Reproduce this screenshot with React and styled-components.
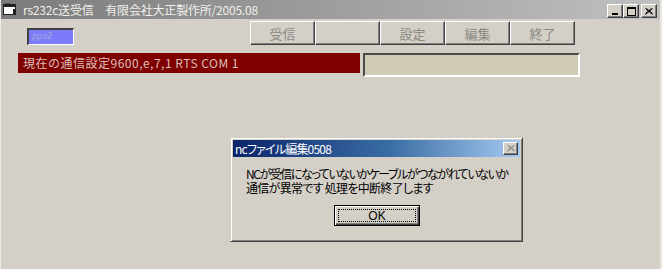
import React from "react";
import styled, { createGlobalStyle } from "styled-components";

const Global = createGlobalStyle`
  html, body { margin: 0; padding: 0; background: #d4d0c8; }
  body { font-family: "Noto Sans CJK JP", "Noto Sans", sans-serif; }
`;

const Window = styled.div`
  position: relative;
  width: 662px;
  height: 269px;
  box-sizing: border-box;
  background: #d4d0c8;
  border-left: 1px solid #ece9e0;
  border-right: 2px solid #e8e6dd;
  display: flex;
  flex-direction: column;
  overflow: hidden;
`;

const TitleBar = styled.div`
  height: 19px;
  display: flex;
  align-items: center;
  padding: 0 3px 0 2px;
  background: linear-gradient(to right, #7b7b7b 0%, #9a9a9a 45%, #c0c0c0 100%);
  color: #f0efea;
  font-size: 12px;
  letter-spacing: -0.2px;
  white-space: nowrap;
`;

const TitleText = styled.span`
  margin-left: 6px;
  flex: 1;
  font-feature-settings: "palt";
`;

const CaptionGroup = styled.div`
  display: flex;
  margin-top: 3px;
`;

const CaptionButton = styled.div`
  width: 16px;
  height: 14px;
  box-sizing: border-box;
  margin-left: ${(p) => (p.$gap ? "2px" : "0")};
  background: #d4d0c8;
  border-top: 1px solid #ffffff;
  border-left: 1px solid #ffffff;
  border-right: 1px solid #404040;
  border-bottom: 1px solid #404040;
  box-shadow: inset -1px -1px 0 #808080;
  display: flex;
  align-items: center;
  justify-content: center;
`;

const Body = styled.div`
  flex: 1;
  position: relative;
  display: flex;
  flex-direction: column;
  padding-top: 2px;
`;

const TopRow = styled.div`
  display: flex;
  align-items: flex-end;
  height: 24px;
  padding-left: 26px;
`;

const BlueBox = styled.div`
  width: 47px;
  height: 17px;
  box-sizing: border-box;
  background: #7b7bfb;
  border-top: 2px solid #404040;
  border-left: 2px solid #404040;
  border-right: 1px solid #ffffff;
  border-bottom: 1px solid #ffffff;
  color: #a8a8d4;
  font-family: "DejaVu Sans", sans-serif;
  font-size: 8px;
  line-height: 13px;
  padding-left: 3px;
  font-style: italic;
`;

const ButtonGroup = styled.div`
  display: flex;
  margin-left: 176px;
`;

const CmdButton = styled.div`
  width: 65px;
  height: 24px;
  box-sizing: border-box;
  background: #d4d0c8;
  border-top: 1px solid #ffffff;
  border-left: 1px solid #ffffff;
  border-right: 1px solid #404040;
  border-bottom: 1px solid #404040;
  box-shadow: inset -1px -1px 0 #808080;
  display: flex;
  align-items: center;
  justify-content: center;
  color: #8a8880;
  font-size: 13px;
`;

const SecondRow = styled.div`
  display: flex;
  align-items: flex-start;
  margin-top: 8px;
  padding-left: 17px;
`;

const StatusLabel = styled.div`
  width: 342px;
  height: 20px;
  background: #800000;
  color: #dcc0bc;
  font-size: 12px;
  line-height: 20px;
  padding-left: 5px;
  box-sizing: border-box;
  white-space: nowrap;
  letter-spacing: 0.5px;
`;

const InfoBox = styled.div`
  width: 217px;
  height: 24px;
  margin-left: 3px;
  box-sizing: border-box;
  background: #d2cbb4;
  border-top: 2px solid #4a4a4a;
  border-left: 2px solid #4a4a4a;
  border-right: 2px solid #ffffff;
  border-bottom: 2px solid #ffffff;
`;

const Dialog = styled.div`
  position: absolute;
  left: 229px;
  top: 118px;
  width: 293px;
  height: 105px;
  box-sizing: border-box;
  background: #d4d0c8;
  border-top: 1px solid #d4d0c8;
  border-left: 1px solid #d4d0c8;
  border-right: 1px solid #404040;
  border-bottom: 1px solid #404040;
  box-shadow: inset 1px 1px 0 #ffffff, inset -1px -1px 0 #808080;
  padding: 2px;
  display: flex;
  flex-direction: column;
`;

const DialogTitle = styled.div`
  height: 17px;
  display: flex;
  align-items: center;
  padding: 0 2px 0 2px;
  background: linear-gradient(to right, #0a246a 0%, #3a6ea5 55%, #a6caf0 100%);
  color: #ffffff;
  font-size: 12px;
  white-space: nowrap;
  font-feature-settings: "palt";
`;

const DialogTitleText = styled.span`
  flex: 1;
  letter-spacing: -0.8px;
`;

const SmallClose = styled(CaptionButton)`
  width: 15px;
  height: 13px;
`;

const Message = styled.div`
  margin-top: 10px;
  padding-left: 13px;
  display: flex;
  flex-direction: column;
  color: #000000;
  white-space: nowrap;
  font-feature-settings: "palt";
`;

const MessageLine = styled.div`
  height: 14px;
  font-size: 12px;
  line-height: 14px;
  letter-spacing: ${(p) => p.$spacing};
`;

const ButtonRow = styled.div`
  display: flex;
  padding-left: 101px;
  margin-top: 10px;
`;

const OkButton = styled.div`
  width: 86px;
  height: 21px;
  box-sizing: border-box;
  border: 1px solid #000000;
  background: #d4d0c8;
  box-shadow: inset 1px 1px 0 #ffffff, inset -1px -1px 0 #404040, inset -2px -2px 0 #808080;
  padding: 3px;
  display: flex;
`;

const FocusRect = styled.div`
  flex: 1;
  border: 1px dotted #000000;
  display: flex;
  align-items: center;
  justify-content: center;
  font-family: "Liberation Sans", sans-serif;
  font-size: 12px;
  color: #000;
`;

const TitleIcon = () => (
  <svg width="14" height="13" viewBox="0 0 14 13">
    <rect x="0.5" y="1.5" width="12" height="10" fill="#ffffff" stroke="#202020" />
    <rect x="1" y="2" width="11" height="2" fill="#202020" />
    <rect x="2" y="0.5" width="5" height="1.5" fill="#202020" />
    <rect x="10" y="6" width="3" height="6" fill="#202020" />
  </svg>
);

const MinGlyph = () => (
  <svg width="8" height="7" viewBox="0 0 8 7">
    <rect x="1" y="5" width="6" height="2" fill="#000" />
  </svg>
);
const MaxGlyph = () => (
  <svg width="9" height="9" viewBox="0 0 9 9">
    <rect x="0.5" y="0.5" width="8" height="8" fill="none" stroke="#000" />
    <rect x="0" y="0" width="9" height="2" fill="#000" />
  </svg>
);
const CloseGlyph = ({ color = "#000" }) => (
  <svg width="8" height="7" viewBox="0 0 8 7">
    <path d="M0.5 0.5 L7.5 6.5 M7.5 0.5 L0.5 6.5 M1.5 0.5 L7.5 5.5 M6.5 0.5 L0.5 5.5" stroke={color} strokeWidth="1" fill="none" />
  </svg>
);

export default function App() {
  return (
    <>
      <Global />
      <Window>
        <TitleBar>
          <TitleIcon />
          <TitleText>rs232c送受信　有限会社大正製作所/2005.08</TitleText>
          <CaptionGroup>
            <CaptionButton><MinGlyph /></CaptionButton>
            <CaptionButton><MaxGlyph /></CaptionButton>
            <CaptionButton $gap><CloseGlyph /></CaptionButton>
          </CaptionGroup>
        </TitleBar>
        <Body>
          <TopRow>
            <BlueBox>ppa2</BlueBox>
            <ButtonGroup>
              <CmdButton>受信</CmdButton>
              <CmdButton />
              <CmdButton>設定</CmdButton>
              <CmdButton>編集</CmdButton>
              <CmdButton>終了</CmdButton>
            </ButtonGroup>
          </TopRow>
          <SecondRow>
            <StatusLabel>現在の通信設定9600,e,7,1 RTS COM 1</StatusLabel>
            <InfoBox />
          </SecondRow>
          <Dialog>
            <DialogTitle>
              <DialogTitleText>ncファイル編集0508</DialogTitleText>
              <SmallClose><CloseGlyph color="#8a8a8a" /></SmallClose>
            </DialogTitle>
            <Message>
              <MessageLine $spacing="-1.45px">NCが受信になっていないかケーブルがつながれていないか</MessageLine>
              <MessageLine $spacing="-0.7px">通信が異常です 処理を中断終了します</MessageLine>
            </Message>
            <ButtonRow>
              <OkButton>
                <FocusRect>OK</FocusRect>
              </OkButton>
            </ButtonRow>
          </Dialog>
        </Body>
      </Window>
    </>
  );
}
